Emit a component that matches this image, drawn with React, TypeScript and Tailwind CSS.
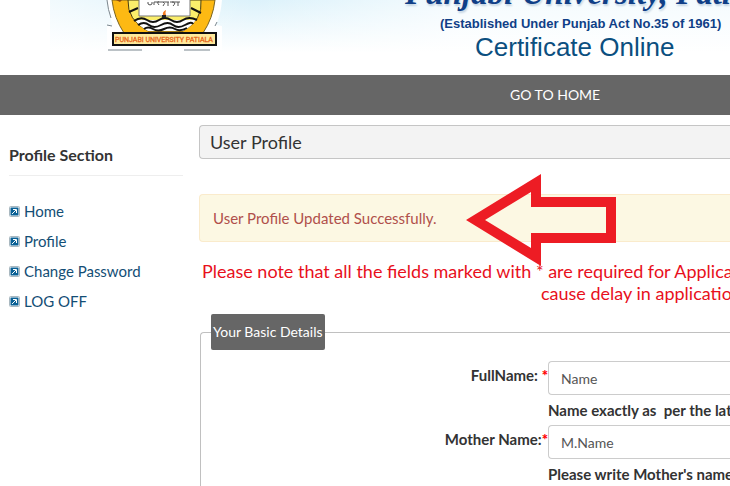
const menuItems = ["Home", "Profile", "Change Password", "LOG OFF"];

const fields = [
  {
    id: "fullName",
    label: "FullName: ",
    value: "Name",
    hint: "Name exactly as \u00a0per the latest certificate",
  },
  {
    id: "motherName",
    label: "Mother Name:",
    value: "M.Name",
    hint: "Please write Mother's name as per certificate",
  },
];

function Emblem() {
  return (
    <svg className="block" width="118" height="52" viewBox="0 0 118 52" aria-hidden="true">
      <path d="M1 0 Q2 14 7 25 L1 26 V50 H116 V26 L110 25 Q115 14 116 0 Z" fill="#fff" />
      <path d="M1 0 Q2 10 5 18 M1 25 L6 26 M2 50 H36 M78 50 H104 M109 26 L111 22" fill="none" stroke="#7a868e" strokeWidth="1" />
      <path d="M6 0 Q8 18 18 33 H97 Q107 18 109 0 Z" fill="#fdb913" stroke="#7a6420" strokeWidth="1" />
      <path d="M22 0 Q21 20 42 31 H77 Q97 20 95 0 Z" fill="#fbee6b" stroke="#4a3c10" strokeWidth="1" />
      <path d="M29 20 H90 Q85 27 77 31 H42 Q34 27 29 20 Z" fill="#fff" />
      <g fill="none" stroke="#111" strokeWidth="2">
        <path d="M23 12 L32 8 M85 8 L95 13" />
        <path d="M28 21 Q35 16 41 20 T53 20 T65 20 T77 20 T91 20" />
        <path d="M32 25 Q38 21 43 25 T55 25 T67 25 T79 25 T87 24" />
        <path d="M38 29 Q42 26 47 29 T58 29 T69 29 T81 28" />
      </g>
      <path d="M33 0 V16 H84 V0" fill="#fff" stroke="#777" strokeWidth="1" />
      <path
        d="M42 2 v2 q2 2 4 0 v-2 m2 0 v3 M48 2 h15 m-10 3 q-3 -4 0 -3 m4 0 q3 1 0 4 m5 -4 v4 m2 -4 h10 m-7 4 q4 -4 -1 -4 m6 0 v4"
        fill="none"
        stroke="#555"
        strokeWidth="1"
      />
      <path d="M57 15 Q56 12 60 10 Q59 13 60 15 Z" fill="#f47b20" />
      <path d="M56 15 H60 V18 H56 Z" fill="#222" />
      <path d="M10 0 L16 0 L14 2 Z" fill="#8a4b10" />
      <rect x="7" y="33" width="103" height="12" fill="#ffea9b" stroke="#111" strokeWidth="2" />
      <text x="58" y="42" textAnchor="middle" fontSize="7" fill="#e5641c" stroke="#e5641c" strokeWidth="0.3" fontFamily="Roboto, sans-serif">
        PUNJABI UNIVERSITY PATIALA
      </text>
    </svg>
  );
}

function LinkIcon() {
  return (
    <svg className="shrink-0" width="11" height="11" viewBox="0 0 11 11" aria-hidden="true">
      <rect x="0.5" y="0.5" width="10" height="10" rx="1" fill="#fff" stroke="#a9b8c0" />
      <rect x="1.5" y="1.5" width="8" height="8" fill="#0a6196" />
      <path d="M4 3.5 H7.5 V7 M7 4 L3 8" fill="none" stroke="#fff" strokeWidth="1" />
    </svg>
  );
}

function Header() {
  return (
    <header className="h-[75px] overflow-hidden pl-[50px] whitespace-nowrap">
      <div className="h-full bg-linear-to-b from-[#dcf2fb] to-white to-70%">
        <div className="flex h-full items-start bg-linear-to-r from-white/60 via-transparent via-30% to-white/70 to-60%">
          <div className="w-[355px] shrink-0 pl-[56px]">
            <Emblem />
          </div>
          <div className="-mt-7 text-[#0b4f7f]">
            <h1 className="font-['Liberation_Serif',serif] text-[33px] leading-[42px] font-bold text-[#103f87] italic [text-shadow:1px_2px_2px_#c4d4e2]">
              Punjabi University, Patiala
            </h1>
            <p className="pl-[35px] font-['Liberation_Sans',sans-serif] text-[13px] leading-5 font-bold text-[#103f87]">
              (Established Under Punjab Act No.35 of 1961)
            </p>
            <p className="pl-[70px] font-['Liberation_Sans',sans-serif] text-[26px] leading-[26px]">
              Certificate Online
            </p>
          </div>
        </div>
      </div>
    </header>
  );
}

function Sidebar() {
  return (
    <aside className="w-[174px] shrink-0 pt-7">
      <h2 className="border-b border-[#eee] pb-2 text-base leading-6 font-bold">Profile Section</h2>
      <ul className="mt-5 text-[15px] leading-[30px] text-[#134e75]">
        {menuItems.map((item) => (
          <li key={item}>
            <a href="#" className="flex items-center gap-1">
              <LinkIcon />
              {item}
            </a>
          </li>
        ))}
      </ul>
    </aside>
  );
}

function Arrow() {
  return (
    <svg className="absolute -top-5 left-[267px]" width="150" height="92" viewBox="0 0 150 92" aria-hidden="true">
      <path
        d="M0 46 L75 0 V23 H150 V69 H75 V92 Z M19 46 L65 74 V59 H140 V33 H65 V18 Z"
        fill="#ed1c24"
        fillRule="evenodd"
      />
    </svg>
  );
}

export default function App() {
  return (
    <div className="h-screen overflow-hidden bg-white font-[Lato,sans-serif] text-[#333]">
      <Header />
      <nav className="flex h-10 items-center bg-[#666] pl-[510px] text-sm text-white">
        <a href="#">GO TO HOME</a>
      </nav>

      <div className="flex gap-4 pl-[9px]">
        <Sidebar />
        <main className="min-w-0 flex-1 pt-[10px]">
          <h1 className="rounded-l-sm border border-r-0 border-[#c5c5c5] bg-[#f3f3f3] px-[10px] text-lg leading-8">
            User Profile
          </h1>

          <div className="relative mt-[35px]">
            <p className="rounded-l-sm border border-r-0 border-[#faebcc] bg-[#fcf8e3] px-[13px] text-[15px] leading-[46px] text-[#b0504b]">
              User Profile Updated Successfully.
            </p>
            <Arrow />
          </div>

          <div className="mt-[18px] pl-[3px] text-lg leading-[22px] whitespace-nowrap text-[#e8101c]">
            <p>Please note that all the fields marked with * are required for Application</p>
            <p className="pl-[339px]">cause delay in application</p>
          </div>

          <fieldset className="mt-[10px] ml-px rounded-tl-sm border border-r-0 border-b-0 border-[#c0c0c0] pl-[10px]">
            <legend className="rounded-xs bg-[#666] px-0.5 text-sm leading-9 text-white">
              Your Basic Details
            </legend>
            <div className="pt-[11px]">
              {fields.map((field) => (
                <div key={field.id} className="grid grid-cols-[337px_1fr]">
                  <label htmlFor={field.id} className="pt-0.5 text-right text-[15px] leading-6 font-bold whitespace-pre">
                    {field.label}
                    <span className="font-black text-[#f00]">*</span>
                  </label>
                  <div className="min-w-0 overflow-hidden whitespace-nowrap">
                    <input
                      id={field.id}
                      defaultValue={field.value}
                      className="block h-[34px] w-full rounded-l-sm border border-r-0 border-[#ccc] px-3 text-sm text-[#555]"
                    />
                    <p className="text-[15px] leading-[30px] font-bold">{field.hint}</p>
                  </div>
                </div>
              ))}
            </div>
          </fieldset>
        </main>
      </div>
    </div>
  );
}
